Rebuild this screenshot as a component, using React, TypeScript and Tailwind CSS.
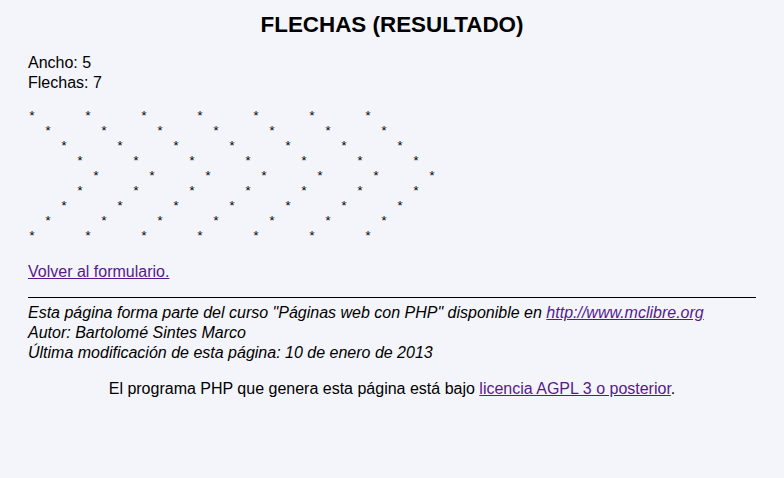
export default function App() {
  const ancho = 5
  const flechas = 7
  const rows: string[] = []
  for (let i = 0; i < ancho * 2 - 1; i++) {
    const r = i < ancho ? i : ancho * 2 - 2 - i
    rows.push(' '.repeat(r * 2) + Array(flechas).fill('*').join(' '.repeat(6)))
  }

  return (
    <div className="min-h-[478px] bg-[#f4f5fa] px-[28px] pt-[12px] pb-4 font-['Liberation_Sans',Arial,sans-serif] text-[16px] text-black">
      <h1 className="text-center text-[22.4px] font-bold leading-[26px]">FLECHAS (RESULTADO)</h1>
      <div className="mt-[15px] leading-[20px]">
        <p>Ancho: {ancho}</p>
        <p>Flechas: {flechas}</p>
      </div>
      <div className="mt-[16px] whitespace-pre font-['Liberation_Mono',monospace] text-[13.333px] leading-[15px]">
        {rows.map((row, i) => (
          <div key={i}>{row}</div>
        ))}
      </div>
      <p className="mt-[19px] leading-[18px]">
        <a href="#" className="text-[#551a8b] underline">Volver al formulario.</a>
      </p>
      <hr className="mt-[16px] border-t border-black" />
      <div className="mt-[5px] italic leading-[20px]">
        <p>
          Esta página forma parte del curso "Páginas web con PHP" disponible en{' '}
          <a href="#" className="text-[#551a8b] underline">http://www.mclibre.org</a>
        </p>
        <p>Autor: Bartolomé Sintes Marco</p>
        <p>Última modificación de esta página: 10 de enero de 2013</p>
      </div>
      <p className="mt-[16px] text-center leading-[20px]">
        El programa PHP que genera esta página está bajo{' '}
        <a href="#" className="text-[#551a8b] underline">licencia AGPL 3 o posterior</a>.
      </p>
    </div>
  )
}
